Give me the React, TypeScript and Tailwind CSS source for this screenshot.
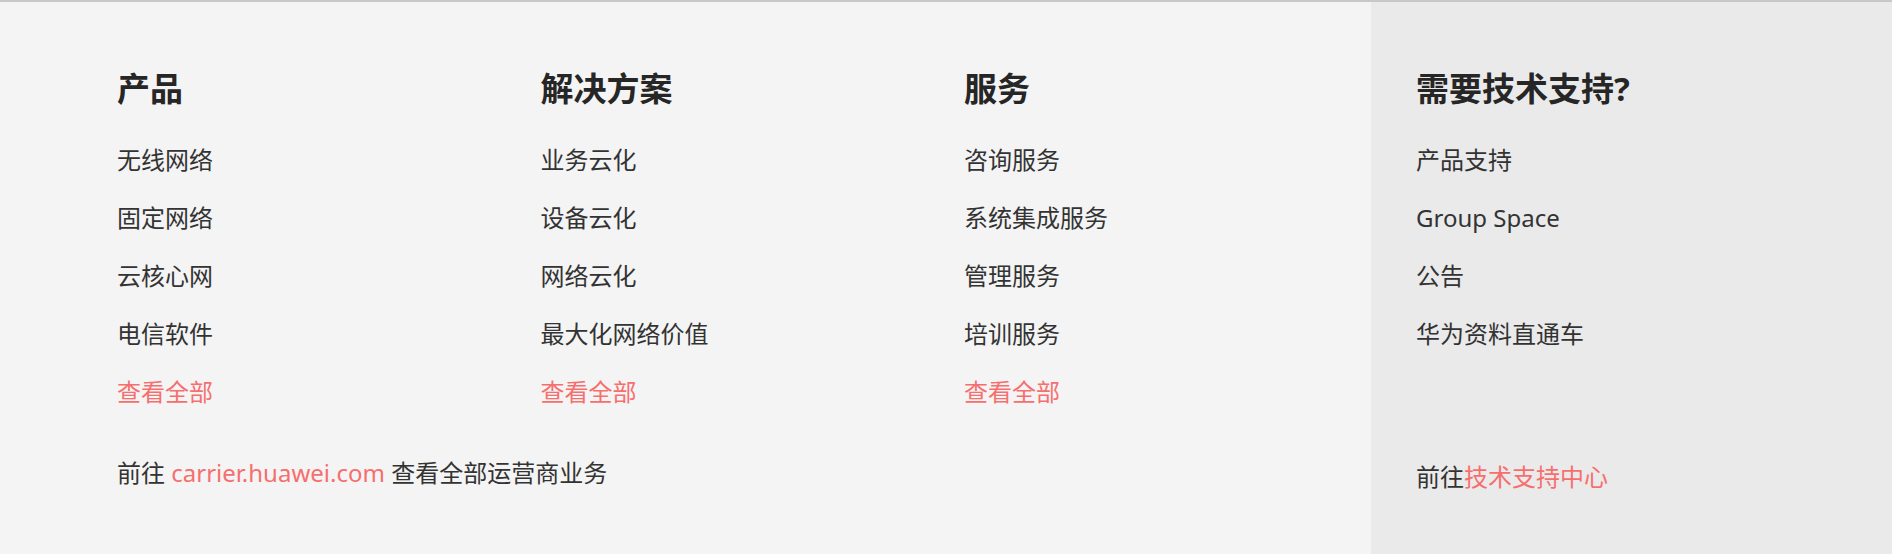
import React from "react";

const cols = [
  { title: "产品", items: ["无线网络", "固定网络", "云核心网", "电信软件"] },
  { title: "解决方案", items: ["业务云化", "设备云化", "网络云化", "最大化网络价值"] },
  { title: "服务", items: ["咨询服务", "系统集成服务", "管理服务", "培训服务"] },
];

const font = {
  fontFamily: '"Noto Sans", "Noto Sans CJK SC", sans-serif',
};

export default function App() {
  return (
    <div
      className="w-[1892px] h-[554px] flex border-t-2 border-[#c8c8c8] bg-[#f4f4f4] text-[#333333] overflow-hidden"
      style={font}
    >
      <div className="flex-1 min-w-0 pl-[117px] pt-[67px]">
        <div className="grid grid-cols-[423.5px_423.5px_1fr]">
          {cols.map((c) => (
            <div key={c.title}>
              <h3 className="text-[33px] leading-[40px] font-bold text-[#262626]">{c.title}</h3>
              <ul className="mt-[22px]">
                {c.items.map((it) => (
                  <li key={it} className="text-[24px] leading-[58px]">
                    {it}
                  </li>
                ))}
                <li className="text-[24px] leading-[58px] text-[#f66f6e]">查看全部</li>
              </ul>
            </div>
          ))}
        </div>
        <p className="mt-[23px] text-[24px] leading-[58px]">
          前往 <span className="text-[#f66f6e]">carrier.huawei.com</span> 查看全部运营商业务
        </p>
      </div>
      <div className="w-[521px] shrink-0 bg-[#eaeaea] pl-[45px] pt-[67px]">
        <h3 className="text-[33px] leading-[40px] font-bold text-[#262626]">需要技术支持?</h3>
        <ul className="mt-[22px]">
          {["产品支持", "Group Space", "公告", "华为资料直通车"].map((it) => (
            <li key={it} className="text-[24px] leading-[58px]">
              {it}
            </li>
          ))}
        </ul>
        <p className="mt-[85px] text-[24px] leading-[58px]">
          前往<span className="text-[#f66f6e]">技术支持中心</span>
        </p>
      </div>
    </div>
  );
}
